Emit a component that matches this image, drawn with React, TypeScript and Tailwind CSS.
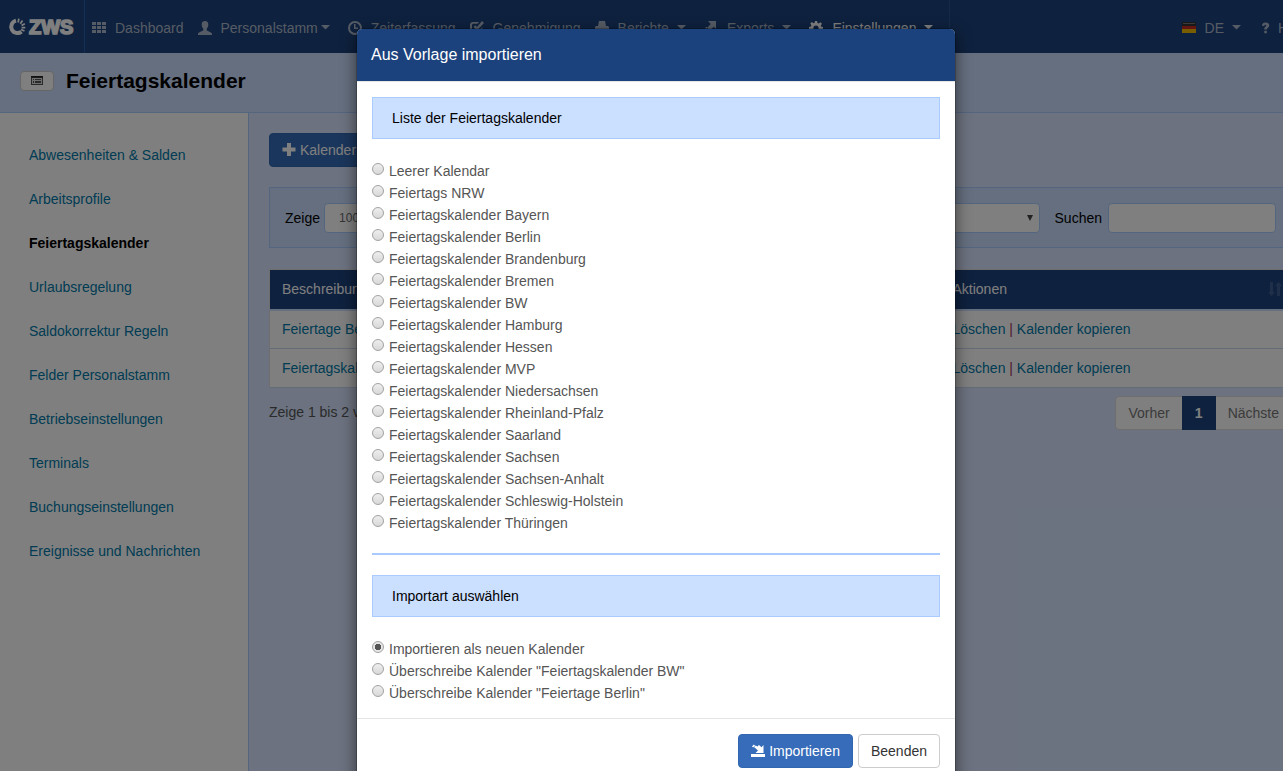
import { useState, type ReactNode } from 'react'

const sidebarLinks = [
  'Abwesenheiten & Salden',
  'Arbeitsprofile',
  'Feiertagskalender',
  'Urlaubsregelung',
  'Saldokorrektur Regeln',
  'Felder Personalstamm',
  'Betriebseinstellungen',
  'Terminals',
  'Buchungseinstellungen',
  'Ereignisse und Nachrichten',
]

const templates = [
  'Leerer Kalendar',
  'Feiertags NRW',
  'Feiertagskalender Bayern',
  'Feiertagskalender Berlin',
  'Feiertagskalender Brandenburg',
  'Feiertagskalender Bremen',
  'Feiertagskalender BW',
  'Feiertagskalender Hamburg',
  'Feiertagskalender Hessen',
  'Feiertagskalender MVP',
  'Feiertagskalender Niedersachsen',
  'Feiertagskalender Rheinland-Pfalz',
  'Feiertagskalender Saarland',
  'Feiertagskalender Sachsen',
  'Feiertagskalender Sachsen-Anhalt',
  'Feiertagskalender Schleswig-Holstein',
  'Feiertagskalender Thüringen',
]

const importModes = [
  'Importieren als neuen Kalender',
  'Überschreibe Kalender "Feiertagskalender BW"',
  'Überschreibe Kalender "Feiertage Berlin"',
]

const calendars = ['Feiertage Berlin', 'Feiertagskalender BW']

function Icon({ children }: { children: ReactNode }) {
  return (
    <svg width="14" height="14" viewBox="0 0 14 14" fill="currentColor" className="shrink-0" aria-hidden="true">
      {children}
    </svg>
  )
}

const icons = {
  grid: (
    <Icon>
      <path d="M0 1h4v3H0zM5 1h4v3H5zM10 1h4v3h-4zM0 5h4v3H0zM5 5h4v3H5zM10 5h4v3h-4zM0 9h4v3H0zM5 9h4v3H5zM10 9h4v3h-4z" />
    </Icon>
  ),
  user: (
    <Icon>
      <path d="M7 0C4.800 0 3.700 1.400 3.700 3.500 3.700 5.500 4.600 7 5.300 7.800V9.300C5 10.200 0 11 0 13v1h14v-1c0-2-5-2.800-5.300-3.700V7.800C9.400 7 10.300 5.500 10.300 3.500 10.300 1.400 9.200 0 7 0z" />
    </Icon>
  ),
  clock: (
    <Icon>
      <path fillRule="evenodd" d="M7 0a7 7 0 1 1 0 14A7 7 0 0 1 7 0zm0 2a5 5 0 1 0 0 10A5 5 0 0 0 7 2zM6 3h1.500v3.500H10V8H6z" />
    </Icon>
  ),
  check: (
    <Icon>
      <path d="M3 1h6L7.500 2.800H3.500c-.9 0-1.500.6-1.500 1.500V10c0 .9.600 1.500 1.500 1.500H9c.9 0 1.500-.6 1.500-1.500V8L12.300 6.200V10.500c0 1.700-1.200 2.800-2.800 2.800H3c-1.700 0-3-1.200-3-2.800V4c0-1.700 1.300-3 3-3zM12 0l2 2-7 7.500L3.500 6 5.300 4.300 7 6z" />
    </Icon>
  ),
  print: (
    <Icon>
      <path d="M4 0h6l1 5H3zM1 5h12l1 1v4h-2V8H2v2H0V6zM3 9h8l1 4H2z" />
    </Icon>
  ),
  exports: (
    <Icon>
      <path d="M4 0h8v8L9.800 5.800 6 9.500 3 7l3.700-4zM2 10.500h10v3H2zM1.500 6H3v1.500H1.500z" />
    </Icon>
  ),
  cog: (
    <Icon>
      <path
        fillRule="evenodd"
        d="M5.900 0h2.200l.4 1.900 1.200.5L11.400 1.300l1.500 1.500-1.100 1.700.5 1.200 1.700.3v2.200l-1.900.4-.5 1.200 1.100 1.700-1.500 1.500-1.700-1.100-1.200.5L8.100 14H5.900l-.4-1.900-1.200-.5-1.700 1.100-1.500-1.500 1.100-1.700-.5-1.200L0 8.100V5.900l1.900-.4.5-1.200L1.300 2.600l1.500-1.500 1.700 1.100 1.200-.5zM7 4.400a2.600 2.600 0 1 0 0 5.200 2.600 2.600 0 0 0 0-5.200z"
      />
    </Icon>
  ),
  plus: (
    <Icon>
      <path d="M5 0h4v4.500h4.500v4H9V13H5V8.500H.5v-4H5z" />
    </Icon>
  ),
  saveImport: (
    <Icon>
      <path d="M0 10h14v3H0zM12.500 1v8H4.500l2.500-2.500L3 3l1.800-1.500 1.500 1L8 1l2.500 2.300zM1 2.500 2.800.5l1.200 1L2.200 3.500z" />
    </Icon>
  ),
  listAlt: (
    <svg width="12" height="9" viewBox="0 0 12 9" aria-hidden="true">
      <path d="M0 0h12v9H0z" fill="#555" />
      <path d="M1 2h10v6H1z" fill="#ddd" />
      <path d="M2 3h1v1H2zM4 3h6v1H4zM2 5h1v2H2zM4 5h6v2H4z" fill="#555" />
      <path d="M0 0h12v1.500H0z" fill="#222" />
    </svg>
  ),
  question: (
    <svg width="9" height="12" viewBox="0 0 9 12" fill="currentColor" aria-hidden="true">
      <path d="M1 3.800C1 1.500 2.500.5 4.600.5c2.200 0 3.700 1.200 3.700 3 0 2.200-2.500 2.400-2.500 4H3.300c0-2.600 2-2.700 2-3.900 0-.6-.4-.9-.9-.9-.7 0-1 .4-1 1.300zM3.300 8.700h2.500v2.500H3.300z" />
    </svg>
  ),
  sort: (
    <svg width="15" height="14" viewBox="0 0 15 14" fill="#3f5f92" aria-hidden="true">
      <path d="M2 0h3v10h2l-3.500 4L0 10h2zM9 14h3V4h2l-3.500-4L7 4h2z" />
    </svg>
  ),
}

function Caret() {
  return (
    <svg width="9" height="5" viewBox="0 0 9 5" fill="currentColor" className="mr-1" aria-hidden="true">
      <path d="M0 0h9L4.500 4.500z" />
    </svg>
  )
}

function NavItem({ icon, label, caret, active }: { icon: ReactNode; label: string; caret?: string; active?: boolean }) {
  return (
    <a href="#" className={`flex items-center px-[7px] ${active ? 'text-white' : 'text-[#adb9ca]'}`}>
      {icon}
      <span className="ml-[9px]">{label}</span>
      {caret && (
        <span className={caret}>
          <Caret />
        </span>
      )}
    </a>
  )
}

function Logo() {
  return (
    <a href="#" aria-label="ZWS" className="flex w-[85px] items-center border-r border-[#2960a8] pl-2">
      <svg width="68" height="20" viewBox="0 0 68 20" className="shrink-0">
        <path d="M8 3.600a6.300 6.300 0 1 0 5.500 11" fill="none" stroke="#fff" strokeWidth="4" />
        <path
          d="M10.200 5.500 10.800 1.700M12.300 6.700 14.500 3.500M13.500 8.500 16.800 6.700M13.600 10.600 17.300 10.600M13 12.500 16.500 14"
          stroke="#fff"
          strokeWidth="1.700"
        />
        <text
          x="21"
          y="17"
          fill="#fff"
          stroke="#fff"
          strokeWidth="1.600"
          fontSize="20"
          fontWeight="700"
          fontFamily="Liberation Sans, sans-serif"
        >
          ZWS
        </text>
      </svg>
    </a>
  )
}

function Navbar() {
  return (
    <nav className="flex h-[53px] bg-[#1c427d]">
      <Logo />
      <div className="flex border-r border-[#2a5291] pt-0.5 pr-[5px]">
        <NavItem icon={icons.grid} label="Dashboard" />
        <NavItem icon={icons.user} label="Personalstamm" caret="ml-[3px]" />
        <NavItem icon={icons.clock} label="Zeiterfassung" />
        <NavItem icon={icons.check} label="Genehmigung" />
        <NavItem icon={icons.print} label="Berichte" caret="ml-2" />
        <NavItem icon={icons.exports} label="Exports" caret="ml-2" />
        <NavItem icon={icons.cog} label="Einstellungen" caret="ml-2" active />
      </div>
      <div className="ml-auto flex gap-4 pt-0.5 pr-1.5 text-[#adb9ca]">
        <a href="#" className="flex items-center">
          <svg width="14" height="11" viewBox="0 0 14 11" aria-hidden="true">
            <path d="M0 0h14v4H0z" fill="#333" />
            <path d="M1 1h12v1H1z" fill="#777" />
            <path d="M0 4h14v3H0z" fill="#c62a22" />
            <path d="M0 7h14v4H0z" fill="#f0bd00" />
          </svg>
          <span className="mr-2 ml-[9px]">DE</span>
          <Caret />
        </a>
        <a href="#" className="flex items-center gap-2">
          {icons.question}
          Hilfe
        </a>
      </div>
    </nav>
  )
}

function Sidebar() {
  return (
    <aside className="w-[249px] shrink-0 border-r border-[#a9cbff] bg-white pt-5">
      {sidebarLinks.map((label) => (
        <a
          key={label}
          href="#"
          className={`flex h-11 items-center pl-[29px] ${
            label === 'Feiertagskalender' ? 'font-bold text-black' : 'text-[#0079a8]'
          }`}
        >
          {label}
        </a>
      ))}
    </aside>
  )
}

function FilterBar() {
  return (
    <div className="mt-5 flex h-[61px] items-center border border-[#a9cbff] bg-[#cbdfff] px-[15px] text-black">
      <label htmlFor="page-size">Zeige</label>
      <select
        id="page-size"
        className="ml-1 h-[30px] w-20 appearance-none rounded-sm border border-[#a9cbff] bg-white px-3.5 text-xs text-[#6b6b6b]"
      >
        <option>100</option>
      </select>
      <div className="relative ml-auto">
        <select
          aria-label="Filter"
          className="block h-[30px] w-48 appearance-none rounded-sm border border-[#a9cbff] bg-white px-3"
        />
        <svg width="6" height="6" viewBox="0 0 6 6" className="absolute top-3 right-[7px]" aria-hidden="true">
          <path d="M0 0h6L3 6z" fill="#444" />
        </svg>
      </div>
      <label htmlFor="search" className="mr-1.5 ml-[15px]">
        Suchen
      </label>
      <input id="search" className="h-[30px] w-[168px] rounded-sm border border-[#a9cbff] bg-white px-3" />
    </div>
  )
}

function CalendarTable() {
  return (
    <table className="mt-[21px] w-full table-fixed border-collapse border border-[#dddddd] bg-white text-left">
      <thead>
        <tr className="h-10 border-b-2 border-[#cbdfff] bg-[#1c427d] text-white">
          <th className="w-[656px] px-3 font-normal min-[1200px]:w-[671px]">Beschreibung</th>
          <th className="pr-2 pl-3 font-normal">
            <span className="flex items-center justify-between">
              Aktionen
              {icons.sort}
            </span>
          </th>
        </tr>
      </thead>
      <tbody>
        {calendars.map((name) => (
          <tr key={name} className="h-[39px] border-b border-[#c9d8f0]">
            <td className="px-3">
              <a href="#" className="text-[#0079a8]">
                {name}
              </a>
            </td>
            <td className="px-3 text-[#a03060]">
              <a href="#" className="text-[#0079a8]">
                Löschen
              </a>{' '}
              |{' '}
              <a href="#" className="text-[#0079a8]">
                Kalender kopieren
              </a>
            </td>
          </tr>
        ))}
      </tbody>
    </table>
  )
}

function RadioList({
  name,
  options,
  value,
  onChange,
}: {
  name: string
  options: string[]
  value: string
  onChange: (value: string) => void
}) {
  return (
    <div className="my-5 text-[#555]">
      {options.map((option) => (
        <label key={option} className="flex h-[22px] items-start leading-6">
          <input
            type="radio"
            name={name}
            checked={value === option}
            onChange={() => onChange(option)}
            className="mt-1 mr-[5px] size-3 appearance-none rounded-full border border-[#a2a2a2] bg-linear-to-b from-[#eeeeee] to-[#d8d8d8] checked:bg-[radial-gradient(circle,#555_3px,#e6e6e6_3px)]"
          />
          {option}
        </label>
      ))}
    </div>
  )
}

function SectionTitle({ children }: { children: ReactNode }) {
  return (
    <h5 className="flex h-[42px] items-center border border-[#a9cbff] bg-[#cbdfff] px-[19px] text-black">{children}</h5>
  )
}

function ImportModal() {
  const [template, setTemplate] = useState('')
  const [mode, setMode] = useState(importModes[0])

  return (
    <div className="absolute inset-y-0 -right-[29px] left-0 bg-black/50">
      <div
        role="dialog"
        aria-labelledby="modal-title"
        className="mx-auto mt-7 w-[600px] rounded-md border border-black/20 bg-white bg-clip-padding shadow-[0_5px_15px_rgba(0,0,0,0.5)]"
      >
        <div className="flex h-[53px] items-center rounded-t-[5px] border-b border-[#e5e5e5] bg-[#1c427d] px-3.5">
          <h4 id="modal-title" className="text-base text-white">
            Aus Vorlage importieren
          </h4>
        </div>
        <div className="p-[15px]">
          <SectionTitle>Liste der Feiertagskalender</SectionTitle>
          <RadioList name="template" options={templates} value={template} onChange={setTemplate} />
          <hr className="mb-5 border-t-2 border-[#a9cbff]" />
          <SectionTitle>Importart auswählen</SectionTitle>
          <div className="-mb-5">
            <RadioList name="mode" options={importModes} value={mode} onChange={setMode} />
          </div>
        </div>
        <div className="flex justify-end gap-[5px] border-t border-[#e5e5e5] p-[15px]">
          <button className="flex h-[34px] items-center gap-1 rounded-sm border border-[#3166b0] bg-[#366cb9] px-3 text-white">
            {icons.saveImport}
            Importieren
          </button>
          <button className="h-[34px] rounded-sm border border-[#cccccc] bg-white px-3 text-[#333]">Beenden</button>
        </div>
      </div>
    </div>
  )
}

export default function App() {
  return (
    <div className="relative h-screen overflow-hidden font-['Liberation_Sans',Arial,sans-serif] text-sm">
      <div className="-mr-[29px] flex h-full flex-col">
        <Navbar />
        <header className="flex h-[60px] items-center gap-3 border-b border-[#a9cbff] bg-[#cbdfff] px-5 pb-1">
          <button
            aria-label="Liste"
            className="flex h-5 w-[34px] items-center justify-center rounded-sm border border-[#cccccc] bg-white"
          >
            {icons.listAlt}
          </button>
          <h1 className="text-[21px] font-bold text-black">Feiertagskalender</h1>
        </header>
        <div className="flex grow">
          <Sidebar />
          <main className="grow bg-[#d8e5ff] p-5 text-[#555]">
            <button className="flex h-[34px] items-center gap-1 rounded-sm border border-[#3166b0] bg-[#366cb9] px-3 text-white">
              {icons.plus}
              Kalender hinzufügen
            </button>
            <FilterBar />
            <CalendarTable />
            <div className="mt-2 flex items-start justify-between">
              <p className="pt-1.5">Zeige 1 bis 2 von 2 Einträgen</p>
              <div className="flex h-[34px] rounded-sm border border-[#dddddd] bg-white text-[#777]">
                <button className="px-3">Vorher</button>
                <button className="-my-px w-[34px] bg-[#1c427d] font-bold text-white">1</button>
                <button className="px-3">Nächste</button>
              </div>
            </div>
          </main>
        </div>
      </div>
      <ImportModal />
    </div>
  )
}
